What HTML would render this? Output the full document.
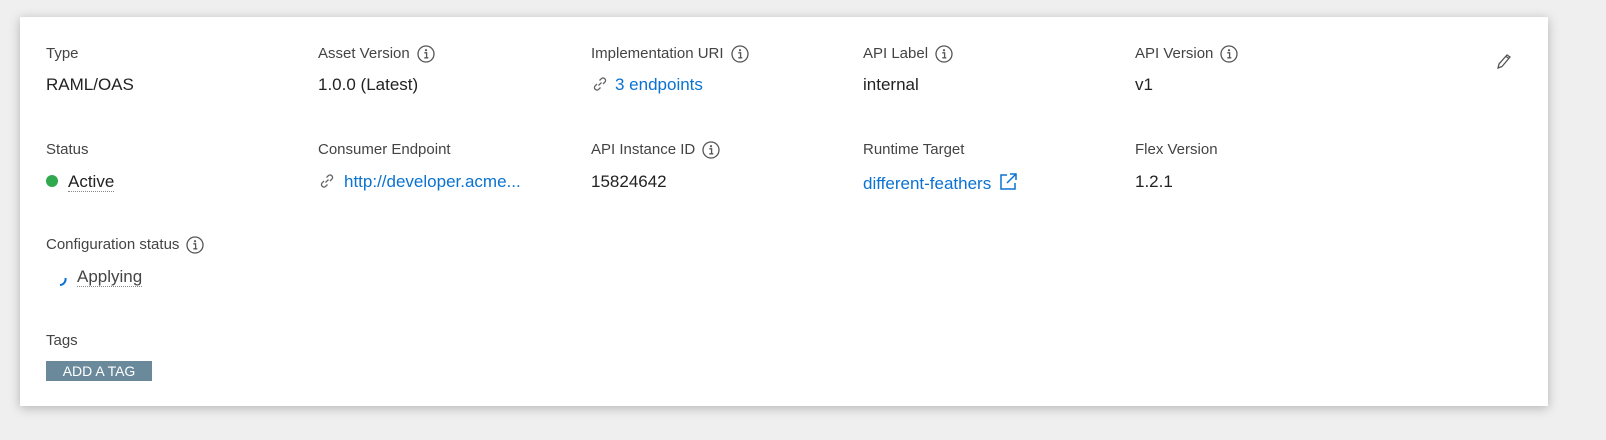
<!DOCTYPE html>
<html><head><style>
body{margin:0;width:1606px;height:440px;background:#efefef;font-family:"Liberation Sans",sans-serif;position:relative;overflow:hidden}
.card{position:absolute;left:20px;top:17px;width:1528px;height:389px;background:#fff;box-shadow:0 2px 10px rgba(0,0,0,.25)}
.l{position:absolute;font-size:15px;color:#444;white-space:nowrap;line-height:18px;height:18px}
.v{position:absolute;font-size:17px;color:#222;white-space:nowrap;line-height:20px}
.a{color:#0a72d2}
.i{margin-left:7px;vertical-align:top}
.dot{border-bottom:1px dotted #888}
</style></head><body>
<svg width="0" height="0" style="position:absolute"><defs><symbol id="inf" viewBox="0 0 18 18"><circle cx="9" cy="9" r="8" fill="none" stroke="#555" stroke-width="1.3"/><circle cx="9" cy="5.2" r="1.1" fill="#555"/><path d="M7.3 7.8h2.3v5M7.3 12.8h4" fill="none" stroke="#555" stroke-width="1.3"/></symbol></defs></svg>
<div class="card"></div>
<div class="l" style="left:46px;top:45px">Type</div>
<div class="v" style="left:46px;top:75px">RAML/OAS</div>
<div class="l" style="left:318px;top:45px">Asset Version<svg class="i" width="18" height="18"><use href="#inf"/></svg></div>
<div class="v" style="left:318px;top:75px">1.0.0 (Latest)</div>
<div class="l" style="left:591px;top:45px">Implementation URI<svg class="i" width="18" height="18"><use href="#inf"/></svg></div>
<div class="v a" style="left:591px;top:75px"><svg width="18" height="18" viewBox="0 0 18 18" style="vertical-align:-3px;margin-right:6px" fill="none" stroke="#666" stroke-width="1.3"><path d="M7.5 10.5l3-3M6 9l-2 2a2.5 2.5 0 003.5 3.5l2-2M12 9l2-2a2.5 2.5 0 00-3.5-3.5l-2 2"/></svg>3 endpoints</div>
<div class="l" style="left:863px;top:45px">API Label<svg class="i" width="18" height="18"><use href="#inf"/></svg></div>
<div class="v" style="left:863px;top:75px">internal</div>
<div class="l" style="left:1135px;top:45px">API Version<svg class="i" width="18" height="18"><use href="#inf"/></svg></div>
<div class="v" style="left:1135px;top:75px">v1</div>
<svg style="position:absolute;left:1495px;top:51px" width="18" height="20" viewBox="0 0 18 20" fill="none" stroke="#555" stroke-width="1.3"><path d="M3 17l1-4L12 4l3 2-8 9.5zM3 17l4-1.5M11 5.5l3 2"/></svg>

<div class="l" style="left:46px;top:141px">Status</div>
<div class="v" style="left:46px;top:172px"><span style="display:inline-block;width:12px;height:12px;border-radius:50%;background:#2fa84f;margin-right:10px;vertical-align:0"></span><span class="dot">Active</span></div>
<div class="l" style="left:318px;top:141px">Consumer Endpoint</div>
<div class="v a" style="left:318px;top:172px"><svg width="18" height="18" viewBox="0 0 18 18" style="vertical-align:-3px;margin-right:8px" fill="none" stroke="#666" stroke-width="1.3"><path d="M7.5 10.5l3-3M6 9l-2 2a2.5 2.5 0 003.5 3.5l2-2M12 9l2-2a2.5 2.5 0 00-3.5-3.5l-2 2"/></svg>http://developer.acme...</div>
<div class="l" style="left:591px;top:141px">API Instance ID<svg class="i" width="18" height="18"><use href="#inf"/></svg></div>
<div class="v" style="left:591px;top:172px">15824642</div>
<div class="l" style="left:863px;top:141px">Runtime Target</div>
<div class="v a" style="left:863px;top:172px">different-feathers<svg width="20" height="20" viewBox="0 0 20 20" style="vertical-align:-3px;margin-left:7px" fill="none" stroke="#0a72d2" stroke-width="1.5"><path d="M9 3H3v14h14v-6M12 2h6v6M18 2l-9 9"/></svg></div>
<div class="l" style="left:1135px;top:141px">Flex Version</div>
<div class="v" style="left:1135px;top:172px">1.2.1</div>

<div class="l" style="left:46px;top:236px">Configuration status<svg class="i" width="18" height="18"><use href="#inf"/></svg></div>
<svg style="position:absolute;left:52px;top:271px" width="16" height="16" viewBox="0 0 16 16" fill="none" stroke="#0a72d2" stroke-width="2"><path d="M13.5 7A6 6 0 0 1 8 14"/></svg>
<div class="v" style="left:77px;top:267px;color:#444"><span class="dot">Applying</span></div>

<div class="l" style="left:46px;top:332px">Tags</div>
<div style="position:absolute;left:46px;top:361px;width:106px;height:20px;background:#6a8a9b;color:#fff;font-size:14px;line-height:20px;text-align:center">ADD A TAG</div>
</body></html>
